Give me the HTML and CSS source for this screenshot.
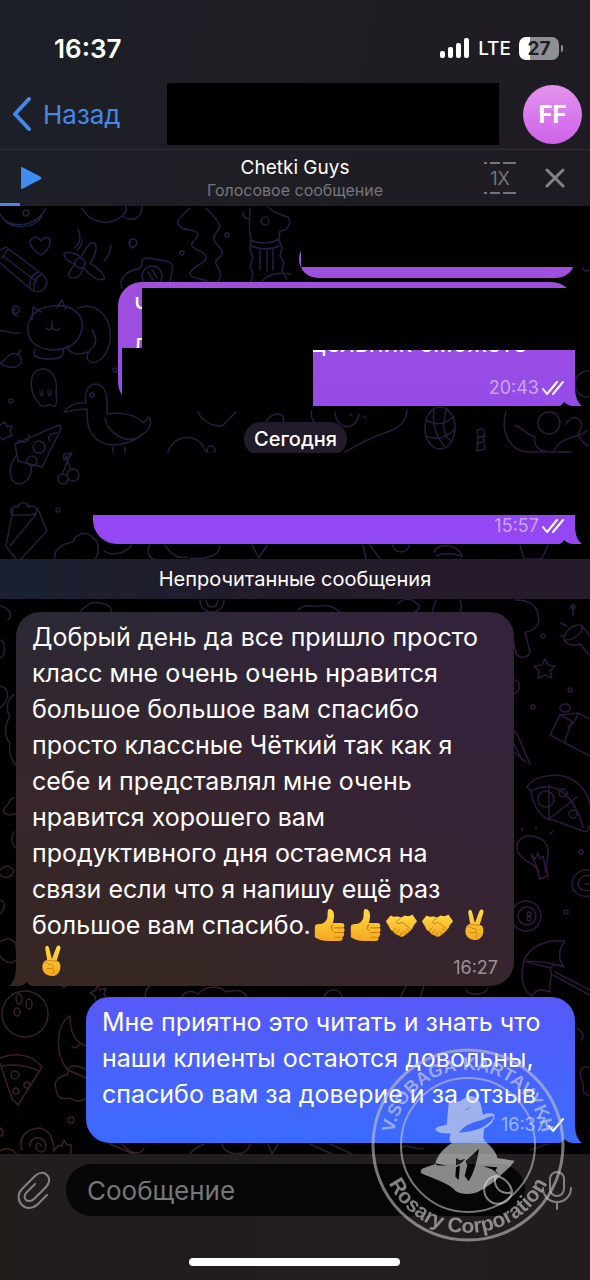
FILE: index.html
```html
<!DOCTYPE html>
<html lang="ru">
<head>
	<meta charset="UTF-8">
	<meta name="viewport" content="width=device-width, initial-scale=1">
	<title>Chetki Guys</title>
	<link rel="stylesheet" href="styles.css">
</head>
<body>
<!-- shared shapes -->
<svg class="defs" aria-hidden="true">
	<defs>
		<linearGradient id="skin" x1="0" y1="0" x2="0" y2="1">
			<stop offset="0" stop-color="#ffd94a"/>
			<stop offset="1" stop-color="#f5a81c"/>
		</linearGradient>
		<symbol id="thumb" viewBox="0 0 36 36">
			<path fill="url(#skin)" d="M3 20c0-2 2-3 4-3 5 0 8-3 9-6 1-3 0-6 1-9 1-2 5-1 6 3 1 4 0 8-1 11h9c4 0 4 4 2 5 2 1 2 4 0 5 2 1 1 4-1 5 1 2 0 4-3 4H17c-5 0-9-1-14-4z"/>
			<path fill="none" stroke="#c97d10" stroke-width="1.2" stroke-linecap="round" d="M24 21h8M24 26h8M24 31h6M22 18c-2 2-2 4 0 6"/>
		</symbol>
		<symbol id="shake" viewBox="0 0 36 36">
			<path fill="url(#skin)" d="M2 14l5-6c3 2 6 1 8 1l3 1 4-2c3 1 5 1 8-1l5 7-4 5c0 3-3 4-4 6-1 2-4 2-5 4-2 2-5 2-6 0-3 0-5-2-6-4-3-1-4-4-5-6z"/>
			<path fill="none" stroke="#c97d10" stroke-width="1" stroke-linecap="round" stroke-linejoin="round" d="M18 10l-5 5c1 2 4 2 6 0l9 7M10 24l3-3M13 27l3-4M17 29l2-3M24 22l3 3M21 25l3 3"/>
		</symbol>
		<symbol id="victory" viewBox="0 0 36 36">
			<path fill="url(#skin)" d="M15 17L13 5c0-4 3-4 4-1l3 12 5-13c2-3 5-1 4 2l-4 13c3 0 4 3 4 6 0 6-4 10-9 10-6 0-10-4-10-9 0-4 1-7 5-8z"/>
			<path fill="none" stroke="#c97d10" stroke-width="1" stroke-linecap="round" stroke-linejoin="round" d="M11 21c2-3 5-2 5 0l4 1c3 1 2 4-1 4h-4M15 17l5 1 5 0M21 26c2 1 2 3 0 5"/>
		</symbol>
		<symbol id="tail" viewBox="0 0 24 20">
			<path d="M16 0h1c0 10 2 16 7 20h-8z"/>
			<path fill="#000" d="M0 20c3 0 5-2 6-4 2 2 5 4 9 4z"/>
		</symbol>
		<symbol id="checks" viewBox="0 0 24 16">
			<path fill="none" stroke="currentColor" stroke-width="2" stroke-linecap="round" stroke-linejoin="round" d="M2 9l4 5L16 2M12 14L22 2"/>
		</symbol>
	</defs>
</svg>

<div class="screen">
	<header class="top">
		<div class="status">
			<span class="clock">16:37</span>
			<div class="signal">
				<svg width="30" height="20" viewBox="0 0 30 20" fill="#fff" aria-hidden="true">
					<rect x="0" y="13" width="5" height="7" rx="2"/>
					<rect x="8" y="9" width="5" height="11" rx="2"/>
					<rect x="16" y="5" width="5" height="15" rx="2"/>
					<rect x="24" y="0" width="5" height="20" rx="2"/>
				</svg>
				<span class="lte">LTE</span>
				<span class="battery">27</span>
			</div>
		</div>
		<nav class="nav">
			<a class="back" href="#">
				<svg width="20" height="34" viewBox="0 0 20 34" aria-hidden="true"><path d="M17 2L3 17l14 15" fill="none" stroke="currentColor" stroke-width="4" stroke-linecap="round" stroke-linejoin="round"/></svg>
				Назад
			</a>
			<div class="peer"></div>
			<a class="avatar" href="#">FF</a>
		</nav>
		<div class="player">
			<button class="play" aria-label="Play"><svg width="22" height="24" viewBox="0 0 22 24"><path d="M1 2v20q0 1 1 1L21 13q1-1 0-2L2 1Q1 1 1 2z" fill="#3f8cf4"/></svg></button>
			<div class="track">
				<div class="name">Chetki Guys</div>
				<div class="kind">Голосовое сообщение</div>
			</div>
			<button class="speed">1X</button>
			<button class="close" aria-label="Close"><svg width="20" height="20" viewBox="0 0 20 20"><path d="M2 2l16 16M18 2L2 18" stroke="#858287" stroke-width="3" stroke-linecap="round"/></svg></button>
			<div class="progress"></div>
		</div>
	</header>

	<main class="chat">
		<!-- wallpaper -->
		<svg class="wallpaper" viewBox="0 206 590 948" preserveAspectRatio="xMidYMin slice" aria-hidden="true">
			<defs>
				<linearGradient id="wallA" x1="0" y1="0" x2="0" y2="1">
					<stop offset="0" stop-color="#1b2148"/>
					<stop offset=".4" stop-color="#20203a"/>
					<stop offset=".8" stop-color="#361f26"/>
					<stop offset="1" stop-color="#3e211b"/>
				</linearGradient>
				<linearGradient id="wallB" x1="0" y1="0" x2="1" y2="0">
					<stop offset="0" stop-color="#2e1b44" stop-opacity="0"/>
					<stop offset="1" stop-color="#2d183f"/>
				</linearGradient>
				<mask id="doodles" maskUnits="userSpaceOnUse" x="0" y="206" width="590" height="948">
					<g fill="none" stroke="#fff" stroke-width="1.5" stroke-linecap="round" stroke-linejoin="round">
						<!-- bowls under the header -->
						<path d="M0 214c8 16 36 14 46-6M4 220c10 10 30 9 38-4M82 208c8 16 28 18 40 8 6-5 5-10 2-12M122 216c8 6 20 4 20-10"/><circle cx="26" cy="213" r="3"/>
						<!-- heart, pencil -->
						<path d="M41 255c-10-6-14-14-8-17 4-2 7 1 8 3 2-4 8-5 9-1 1 6-3 11-9 15z"/>
						<path d="M0 250l6-3 36 27c6 5 6 10 2 15-5 4-9 3-12 1L0 263M3 256l34 26M8 249l-6 9M42 274c-6 3-9 9-8 16M38 272c-6 3-9 8-8 15"/>
						<!-- banana peel -->
						<path d="M81 257c-9-6-17-6-17-2 2 5 7 8 11 9-6 7-8 13-4 14 7 1 11-4 12-11 6 8 15 15 21 12 2-3-4-10-14-16 6-8 8-18 4-20-5-2-8 7-13 14zM78 229c3 7 3 14-4 19M82 240c0 5-2 8-5 10M111 245c0 6-3 12-7 16"/>
						<circle cx="80" cy="263" r="5"/>
						<path d="M133 248c-6-2-5-10 1-9 5 2 3 9-3 8-3-2-2-5 0-5"/>
						<!-- egg -->
						<path d="M122 288c-4-8 4-16 12-18 6-1 8-3 8-8 0-4 6-5 12-3 8 2 16 1 18 6 2 6-2 12-2 18"/><circle cx="152" cy="276" r="10"/><path d="M148 272l5 8M152 270l5 8"/>
						<!-- curly -->
						<path d="M190 208c-8 8-18 14-8 20 6 3 14 1 16 6 0 6-8 6-6 12 2 5 12 4 14 10 2 8-16 10-16 18 2 6 14 4 18 8M206 208c6 6 12 12 14 18-2 8-8 8-6 14 2 6 10 8 8 14-2 5-8 5-6 10 2 6 8 8 2 18"/><circle cx="182" cy="253" r="2"/><circle cx="227" cy="235" r="2"/>
						<!-- llama -->
						<path d="M250 208c0 10-2 20 1 32 8 4 20 4 28-1 1-3 0-6 1-8 8 0 12-8 8-14-8-2-14-4-20-10M243 212c0 6 4 8 7 6M251 240l-1 10 3 8-3 8 3 8-2 8M279 240l3 8-2 8 4 6-2 8 5 10M252 246c8 4 19 4 27 0M260 250v20M267 250v21M273 250v20M262 282c4-8 18-10 28-8"/><circle cx="265" cy="221" r="4"/>
						<!-- cat -->
						<path d="M28 325c2-10 10-16 18-18 8-2 16-2 22 0 10 4 16 12 14 22-3 14-14 21-30 21-16-1-26-10-24-25zM32 320l1-13 8 5M57 308l5-8 4 9M78 308c16-6 30 6 32 22 2 14-4 28-14 32-8 2-12-4-6-12 8-6 6-14 2-20M35 349c-4 8 4 10 14 10 10 0 16-2 14-10M67 346c2 8 12 10 20 6M46 328c2 3 5 2 6-1 2 4 6 4 8 1M52 327v-6"/>
						<path d="M17 316c-8-3-5-12 0-10 5 3 1 9-3 7-2-3 0-5 2-3M0 331c6-2 12 4 20 2"/>
						<!-- leaf, ghost, goose -->
						<path d="M0 363c6-2 8-12 18-9 6 5 3 14-6 13-6 1-9-2-12-4zM21 350l-4 5"/>
						<path d="M34 396c-6-14-2-26 8-27 10-1 16 10 14 22 0 8 2 12-1 15-3 1-4-2-7-1-4 2-7 4-14-9zM40 391c0 6 3 6 3 0M48 391c0 6 3 6 3 0"/><circle cx="11" cy="401" r="2"/><circle cx="115" cy="370" r="2"/>
						<path d="M64 412c6-8 14-10 22-9-2-10 2-19 10-19 10 1 12 12 11 30 12-2 30 0 36 9l6-6c4 6 0 14-8 18-8 8-30 14-42 6-10-6-12-16-12-32-8 0-16 2-23 3zM105 418c2 12 18 28 36 18M113 447v6M125 447v6"/><circle cx="92" cy="395" r="2"/>
						<!-- star, cheese, cherries -->
						<path d="M0 425l5-3 2 5 5-1-2 5 2 5-5 1-4 3-3-3"/>
						<path d="M15 444l44-19c2 0 2 4 1 6l-18 36-24-6zM18 440c8 6 14-2 10-6M50 441c-3-4 0-8 7-8"/><circle cx="39" cy="447" r="6"/><circle cx="32" cy="461" r="5"/>
						<path d="M16 456c-8 10-8 26 2 28 10 0 16-12 12-20"/>
						<circle cx="73" cy="475" r="6"/><circle cx="63" cy="479" r="5"/><path d="M62 474c4-6 4-12 8-20M70 468l-4-12c0 4-4 6-2-2l8-1-4 6"/>
						<!-- cake -->
						<path d="M13 510l-7 36 12 16 29-31-9-22M12 515c-4-8 4-9 6-8 2-6 10-5 10 0 6-3 10 1 8 6-4 4-16 1-24 2zM10 546l26-32"/><circle cx="58" cy="510" r="2"/>
						<path d="M55 560c-2-10 6-16 18-18 2-8 14-12 20-4 8 4 6 20 0 22M132 545c-6 8-20 12-28 6M150 545c-4 6-2 12 4 14M165 545c6 10 14 14 22 12M190 558c14 2 30-2 30-12M252 545l7 13 8-13"/>
						<path d="M168 452c4-12 14-16 24-14 8 2 12 8 14 14M198 412c4 8 12 14 24 14l14-14M265 424c4-10 14-12 18-8l1 8"/><circle cx="211" cy="450" r="4"/>
						<!-- around the date -->
						<path d="M312 408c-3 14 6 20 14 18M345 452c14-8 24-14 42-20 12-4 20-10 20-22M335 412c0 16 20 22 24 2M363 416l3 2M350 414l2 2"/>
						<ellipse cx="440" cy="428" rx="15" ry="21"/><path d="M426 420c10 6 20 4 28-4M426 436c10 4 20 2 28-6M434 410c-2 14 2 26 10 36M446 410c-4 16-2 26 4 30"/>
						<path d="M477 430l6-1 2 4-2 4 2 12-8 2 1-14zM477 438l8-2M477 444l8-3"/>
						<path d="M506 412c-6 20 4 40 24 40h42M515 425c6 2 12 10 20 12-2 8 4 14 10 14M553 452c8-18 30-14 34-22"/><circle cx="549" cy="423" r="11"/><path d="M566 424c8-14 20-2 14 6-4 6 2 12 8 16"/>
						<circle cx="588" cy="384" r="13"/><path d="M590 270c-8 4-8-4-4-6"/>
						<path d="M363 545l3 14M370 545l10 14M393 545c0 9 16 9 16 0M434 552c4-10 26-8 28 5M436 556c8-4 18-2 26 0M520 545l4 14h18l6-14"/>
						<!-- below the unread bar -->
						<path d="M0 606c8 2 14 8 8 14M80 612c6-8 14-12 24-8 8 2 8 6 6 10M200 600c0 16 24 16 24 0M206 601c2 8 10 8 12 0M298 610c8-8 14-2 22-4 8-2 16 2 20 6M398 604c4-6 14-6 18-1 6 2 2 8-2 9M436 600l-4 12M460 600c2 4 2 8 0 12M515 600c16 0 24 6 24 22-2 6-8 10-14 10l5 20c-4 8-10 6-14 2l-4-20"/>
						<path d="M573 604v12M561 623l5 3M560 636h4"/><circle cx="573" cy="607" r="2"/>
						<!-- torch, star, milk -->
						<path d="M564 640c0-8 10-18 18-14l8 10M564 640c4 6 12 6 16 4l10 12M582 626c2 6-8 14-16 14"/>
						<path d="M545 659l3 6 7 1-5 5 2 7-7-3-7 3 1-7-5-5 8-1z"/><circle cx="543" cy="636" r="2"/><circle cx="570" cy="690" r="2"/><circle cx="533" cy="707" r="2"/>
						<path d="M550 735l10-20 18-2 12 6M550 735l40 21M560 715l12 6-8 22M578 713c-2 8-6 12-10 14"/><ellipse cx="565" cy="708" rx="5" ry="4"/>
						<path d="M514 730l4 6 12 28M514 744l8 16M514 752l12 10M514 680c6 0 8 10 0 14"/>
						<!-- pizza -->
						<path d="M527 787c4-8 20-14 36-11 16 4 26 18 27 30M527 787l4 4c20-10 40-4 52 36M531 791c2 18 14 30 22 29l30 11c4 2 6-2 7-6M549 785v34l28-22"/><circle cx="546" cy="799" r="8"/><circle cx="563" cy="793" r="4"/><circle cx="573" cy="814" r="4"/>
						<!-- bulb, lollipop, billiard ball -->
						<path d="M538 872c-2-10-14-8-20-20-4-10 4-17 14-16 10 1 18 8 16 20-2 6-2 12 0 20l-8 3zM539 872l-8-18 4 5 3-6 2 6 3-3 3 16M522 831v-3M536 827v2M550 834l3-3"/><circle cx="581" cy="852" r="2"/>
						<path d="M590 870c-10-2-18 6-18 14s8 14 18 12M590 876c-8-2-12 4-12 8s6 8 12 6M590 884l-5 0"/>
						<circle cx="526" cy="916" r="15"/><circle cx="527" cy="916" r="9"/><circle cx="529" cy="914" r="2"/><circle cx="529" cy="919" r="2"/><circle cx="566" cy="912" r="2"/>
						<!-- umbrella -->
						<path d="M524 961c4-14 22-22 41-20-6 8-8 18-1 26-8-4-10-3-14 1 4 10-2 14 0 24-10-4-14-2-18 4-10-6-12-20-8-35zM524 961l26 7M564 967c-12-4-26-6-40-6M553 975l37 20M555 972l35 18"/>
						<!-- left edge -->
						<path d="M0 640c6 2 6 16 0 18M0 686c10 2 10 14 0 22M14 695c-8 4-8 16-4 22-6 8-6 20 0 26-2 10 2 18 6 22M14 798c-6 0-4 8-10 10-2 6 4 8 12 6M14 832c-4 6-2 12 2 16M0 870c6-6 10-4 14 0-2 10-12 8-14 4M0 900c6 2 6 8 0 14M0 942c8-6 18-2 16 8M0 956c6 8 12 8 16 4"/>
						<!-- ball, pizza slice, moon -->
						<circle cx="25" cy="1014" r="23"/><ellipse cx="19" cy="999" rx="3" ry="5"/><ellipse cx="29" cy="1004" rx="3" ry="5"/><ellipse cx="17" cy="1012" rx="3" ry="4"/>
						<path d="M0 1058c14-6 32-4 42 9l-3 5-21 33-6-6-12-36M2 1066c12-2 26 0 37 5"/><circle cx="15" cy="1075" r="4"/><circle cx="27" cy="1085" r="3"/><circle cx="16" cy="1091" r="3"/>
						<path d="M70 1016c-14 8-16 38-2 54l18 8M70 1016c0 14 4 26 16 30M72 1046c3 4 6 0 8-2M86 1070c-8-6-20-6-18 4-6 2-16 6-12 14 0 10 6 12 14 10 6 4 12 4 16 0"/><circle cx="71" cy="1120" r="3"/>
						<path d="M22 1150c-4-12 4-22 18-22 8 2 14 8 14 24M30 1146c0-12 16-10 16 0 0 8-10 8-10 0 0-4 5-3 5 0M54 1150c4-4 6-6 8-4l2-6 3 5h4v10M0 1128c4 2 4 8 0 8M0 1151c6-4 12-2 16 2"/>
						<path d="M97 984l3 6 6-2-2 6 3 5-6-1-5 4-1-6-5-3 6-3zM146 1000c-2-6 0-12 4-14M180 1000c4-10 12-10 18-6 10-10 22-8 28-2 12-4 22 0 22 10M324 998c2-12 20-10 18 2M400 998l6-12M420 998l4-12M466 990c4 6 18 6 22-2M62 986c2 3 5 0 4-2"/>
						<path d="M110 1144l28 12M122 1144c8 10 18 12 22 4M190 1154c4-6 10-8 14-10M222 1144c2 12 26 14 28 0M268 1144l4 10 6-10M310 1144l22 10M330 1144l22 10M400 1148c8-6 16 4 24 0M530 1150c10-2 14-6 18-6"/>
						<path d="M577 1028c6 4 8 10 4 12M590 1068c-8-4-12 4-8 12s-4 12 8 16"/>
					</g>
				</mask>
			</defs>
			<g mask="url(#doodles)">
				<rect y="206" width="590" height="948" fill="url(#wallA)"/>
				<rect y="206" width="590" height="948" fill="url(#wallB)"/>
			</g>
		</svg>

		<div class="bubble out first">
			<span class="redact r1"></span>
		</div>
		<div class="bubble out second">
			<p>Ч</p>
			<p class="cut"><span>л</span><span>дельник сможете</span></p>
			<span class="redact r2"></span>
			<span class="redact r3"></span>
			<span class="time">20:43 <svg width="24" height="16" aria-hidden="true"><use href="#checks"/></svg></span>
			<svg class="tail" aria-hidden="true"><use href="#tail"/></svg>
		</div>
		<div class="date">Сегодня</div>
		<div class="bubble out third">
			<span class="redact r4"></span>
			<span class="time">15:57 <svg width="24" height="16" aria-hidden="true"><use href="#checks"/></svg></span>
			<svg class="tail" aria-hidden="true"><use href="#tail"/></svg>
		</div>
		<div class="unread">Непрочитанные сообщения</div>
		<div class="bubble in">
			<p>Добрый день да все пришло просто класс мне очень очень нравится большое большое вам спасибо просто классные Чёткий так как я себе и представлял мне очень нравится хорошего вам продуктивного дня остаемся на связи если что я напишу ещё раз большое вам спасибо.<svg class="emoji" role="img" aria-label="👍"><use href="#thumb"/></svg><svg class="emoji" role="img" aria-label="👍"><use href="#thumb"/></svg><svg class="emoji" role="img" aria-label="🤝"><use href="#shake"/></svg><svg class="emoji" role="img" aria-label="🤝"><use href="#shake"/></svg><svg class="emoji" role="img" aria-label="✌"><use href="#victory"/></svg><svg class="emoji" role="img" aria-label="✌"><use href="#victory"/></svg></p>
			<span class="time">16:27</span>
			<svg class="tail" aria-hidden="true"><use href="#tail"/></svg>
		</div>
		<div class="bubble out last">
			<p>Мне приятно это читать и знать что наши клиенты остаются довольны, спасибо вам за доверие и за отзыв</p>
			<span class="time">16:37 <svg width="17" height="16" aria-hidden="true"><path fill="none" stroke="currentColor" stroke-width="2" stroke-linecap="round" stroke-linejoin="round" d="M1 9l4 5L15 2"/></svg></span>
			<svg class="tail" aria-hidden="true"><use href="#tail"/></svg>
		</div>
	</main>

	<footer class="bottom">
		<form class="compose">
			<button type="button" aria-label="Attach"><svg width="34" height="38" viewBox="0 0 34 38" fill="none" stroke="currentColor" stroke-width="2" stroke-linecap="round"><path d="M31 24l-9 9c-5 5-12 5-16 1s-5-11 0-16L19 5c4-4 9-4 12-1s3 8-1 12L18 28c-2 2-6 3-8 1s-2-5 1-8l8-8"/></svg></button>
			<div class="field">
				<input type="text" placeholder="Сообщение" aria-label="Сообщение">
				<button type="button" aria-label="Stickers"><svg width="30" height="30" viewBox="0 0 30 30" fill="none" stroke="currentColor" stroke-width="2"><path d="M13 1a14 14 0 1 0 16 16C19 21 9 12 13 1zM13 1c8 1 15 8 16 16"/></svg></button>
			</div>
			<button type="button" aria-label="Voice"><svg width="32" height="40" viewBox="0 0 32 40" fill="none" stroke="currentColor" stroke-width="2" stroke-linecap="round"><rect x="9" y="2" width="14" height="24" rx="7"/><path d="M2 18c0 8 6 14 14 14s14-6 14-14M16 32v7"/></svg></button>
		</form>
		<div class="home"></div>
	</footer>

	<!-- stamp -->
	<svg class="stamp" viewBox="0 0 194 194" role="img" aria-label="V.Sobaga-Kartavykh Rosary Corporation">
		<defs>
			<path id="arcTop" d="M22 97a75 75 0 0 1 150 0"/>
			<path id="arcBottom" d="M9 97a88 88 0 0 0 176 0"/>
		</defs>
		<circle cx="97" cy="97" r="95" fill="none" stroke="#c4c4c4" stroke-width="3"/>
		<circle cx="97" cy="97" r="67" fill="none" stroke="#c4c4c4" stroke-width="2"/>
		<text class="stampTop"><textPath href="#arcTop" startOffset="50%" text-anchor="middle">V.SOBAGA-KARTAVYKH</textPath></text>
		<text class="stampBottom"><textPath href="#arcBottom" startOffset="50%" text-anchor="middle">Rosary Corporation</textPath></text>
		<g transform="translate(39 32) scale(.3333)" fill="#dfe3e1" fill-rule="evenodd">
			<!-- hat and face -->
			<path d="M116 70C120 60 130 62 138 66C152 68 164 48 184 48C202 50 212 66 214 80L219 104C234 98 252 98 254 106C254 124 238 140 222 146L220 172L224 184L124 190L118 178L122 160C100 162 78 158 76 148C78 138 96 138 110 134ZM147 158C165 132 196 126 222 118C236 108 252 106 250 112C242 132 206 156 147 158ZM162 91C172 90 178 86 182 79C176 84 168 88 162 91Z"/>
			<!-- coat -->
			<path d="M124 190L224 184C244 198 260 220 262 234L314 242C304 258 288 272 272 286C254 308 228 322 204 336C182 344 156 344 138 334C116 308 68 296 34 280C30 272 34 266 42 264L76 252C80 226 104 204 124 190ZM138 234L150 241L166 236L154 250L138 256ZM138 262L150 256L146 300L136 290ZM166 244L207 206C202 236 196 270 176 304L164 288L172 256ZM76 250L112 257L80 256ZM220 259L262 262L256 272L268 286L246 268Z"/>
		</g>
	</svg>
</div>
</body>
</html>
```
FILE: styles.css
```css
*{
	box-sizing: border-box;
	margin: 0;
	padding: 0;
}
body{
	background: #000;
	color: #fff;
	font-family: Inter, "Liberation Sans", sans-serif;
}
button{
	background: none;
	border: 0;
	color: inherit;
	font: inherit;
	display: flex;
	align-items: center;
	justify-content: center;
}
a{
	text-decoration: none;
}
.defs{
	position: absolute;
	width: 0;
	height: 0;
}
.screen{
	position: relative;
	display: flex;
	flex-direction: column;
	min-height: 100vh;
	overflow: hidden;
}

/* header */
.top{
	background: linear-gradient(100deg, #1b1f27, #1f1e25 45%, #1f1b22);
}
.status{
	display: flex;
	justify-content: space-between;
	align-items: center;
	padding: 32px 31px 0 54px;
	height: 64px;
	margin-bottom: 19px;
}
.clock{
	font-size: 26px;
	font-weight: 600;
}
.signal{
	display: flex;
	align-items: center;
	gap: 8px;
}
.lte{
	font-size: 19px;
	font-weight: 500;
}
.battery{
	position: relative;
	width: 40px;
	height: 23px;
	border-radius: 7px;
	background: linear-gradient(90deg, #fff 27%, #8f8e92 27%);
	color: #1f1e25;
	font-size: 19px;
	font-weight: 700;
	line-height: 23px;
	text-align: center;
}
.battery::after{
	content: "";
	position: absolute;
	right: -4px;
	top: 8px;
	width: 2px;
	height: 7px;
	border-radius: 0 2px 2px 0;
	background: #8f8e92;
}
.nav{
	display: flex;
	align-items: center;
	height: 67px;
	padding: 0 8px 4px 12px;
	border-bottom: 1px solid #2f2e35;
}
.back{
	display: flex;
	align-items: center;
	gap: 11px;
	width: 155px;
	color: #4488ec;
	font-size: 26px;
}
.peer{
	flex: 1;
	height: 62px;
	margin-right: 24px;
	background: #000;
}
.avatar{
	width: 59px;
	height: 59px;
	border-radius: 50%;
	background: linear-gradient(#e293ee, #cf62ea);
	color: #fff;
	font-size: 24px;
	font-weight: 700;
	line-height: 59px;
	text-align: center;
}
.player{
	position: relative;
	display: grid;
	grid-template-columns: 100px 1fr 60px 50px;
	align-items: center;
	height: 56px;
	padding-right: 10px;
}
.player .play{
	justify-content: flex-start;
	padding-left: 20px;
}
.track{
	text-align: center;
	padding-left: 20px;
}
.name{
	font-size: 19px;
	line-height: 24px;
}
.kind{
	font-size: 16px;
	line-height: 20px;
	color: #77757b;
}
.speed{
	position: relative;
	width: 32px;
	height: 32px;
	justify-self: center;
	color: #77757b;
	font-size: 18px;
}
/* dashes above and below the speed */
.speed::before,
.speed::after{
	content: "";
	position: absolute;
	left: 0;
	right: 0;
	top: 0;
	height: 2px;
	background: linear-gradient(90deg, #77757b 3px, transparent 3px 6px, #77757b 6px 16px, transparent 16px 19px, #77757b 19px);
}
.speed::after{
	top: auto;
	bottom: 0;
}
.progress{
	position: absolute;
	left: 0;
	bottom: 0;
	width: 20px;
	height: 3px;
	background: #4488ec;
}

/* messages */
.chat{
	position: relative;
	flex: 1;
	display: flex;
	flex-direction: column;
	align-items: flex-start;
	padding: 34px 15px 11px 16px;
	z-index: 0;
}
.wallpaper{
	position: absolute;
	inset: 0;
	width: 100%;
	height: 100%;
	z-index: -1;
}
.bubble{
	position: relative;
	display: grid;
	padding: 7px 16px;
	border-radius: 24px;
	font-size: 25px;
	line-height: 36px;
}
.out{
	align-self: flex-end;
	border-bottom-right-radius: 0;
}
.time{
	align-self: end;
	justify-self: end;
	font-size: 18px;
	line-height: 22px;
	color: rgba(255, 255, 255, .5);
}
.time svg{
	vertical-align: -2px;
	margin-left: -3px;
	color: #fff;
}
.out .time{
	margin-right: -6px;
}
.tail{
	position: absolute;
	right: -7px;
	bottom: 0;
	width: 24px;
	height: 20px;
}
.redact{
	position: absolute;
	background: #000;
}
.first{
	width: 50%;
	max-width: 276px;
	height: 38px;
	border-radius: 20px;
	margin-bottom: 4px;
	background: #a04fdc;
}
.r1{
	top: -34px;
	right: -15px;
	bottom: 11px;
	left: 2px;
}
.second{
	grid-template-rows: auto auto 1fr;
	width: 82%;
	max-width: 457px;
	height: 124px;
	margin-bottom: 16px;
	background: linear-gradient(#a04fdc, #954be8);
	fill: #954be8;
}
.cut{
	display: flex;
	justify-content: space-between;
	padding-right: 32px;
}
.r2{
	top: 6px;
	right: -15px;
	left: 24px;
	height: 62px;
}
.r3{
	top: 66px;
	bottom: -4px;
	left: 4px;
	width: 191px;
}
.date{
	align-self: center;
	padding: 0 10px;
	border-radius: 17px;
	background: #211b2c;
	font-size: 20px;
	font-weight: 500;
	line-height: 34px;
}
.third{
	width: 87%;
	max-width: 482px;
	height: 82px;
	margin: 6px 0 15px;
	background: #9348f4;
	fill: #9348f4;
}
.r4{
	top: -9px;
	right: -15px;
	left: -8px;
	height: 62px;
}
.unread{
	align-self: stretch;
	margin: 0 -15px 13px -16px;
	background: linear-gradient(90deg, #192030, #231b2a 45%, #271b2a);
	font-size: 20px;
	line-height: 40px;
	text-align: center;
}
.in{
	max-width: 498px;
	border-bottom-left-radius: 0;
	background: radial-gradient(circle at 100% 20%, #34213c, transparent 75%), linear-gradient(#2b2835, #38262a 50%, #362724);
	fill: #362724;
}
.in p,
.in .time,
.last p,
.last .time{
	grid-area: 1 / 1;
}
.in .tail{
	right: auto;
	left: -7px;
	transform: scaleX(-1);
}
.emoji{
	width: 36px;
	height: 36px;
	padding: 1px;
	vertical-align: top;
}
.last{
	max-width: 489px;
	margin-top: 11px;
	background: linear-gradient(#5759f8, #3a6bfd);
	fill: #3a6bfd;
}
.last p{
	padding-bottom: 24px;
}

/* input bar */
.bottom{
	background: linear-gradient(90deg, #211d1b, #221c20);
	padding: 10px 17px 14px 16px;
}
.compose{
	display: flex;
	align-items: center;
	gap: 16px;
	margin-bottom: 42px;
	color: #858180;
}
.field{
	flex: 1;
	min-width: 0;
	display: flex;
	align-items: center;
	height: 52px;
	padding: 0 12px 0 21px;
	border-radius: 26px;
	background: #060606;
}
.field input{
	flex: 1;
	min-width: 0;
	background: none;
	border: 0;
	outline: 0;
	color: #fff;
	font: inherit;
	font-size: 26px;
}
.field input::placeholder{
	color: #777;
}
.home{
	width: 38%;
	height: 8px;
	margin: 0 auto;
	border-radius: 4px;
	background: #fff;
}

.stamp{
	position: absolute;
	right: 25px;
	bottom: 38px;
	width: 194px;
	height: 194px;
	opacity: .6;
	pointer-events: none;
}
.stamp text{
	fill: #d6d6d6;
	font-family: "Liberation Sans", sans-serif;
	font-weight: 700;
}
.stampTop{
	font-size: 18px;
}
.stampBottom{
	font-size: 21px;
}
```
